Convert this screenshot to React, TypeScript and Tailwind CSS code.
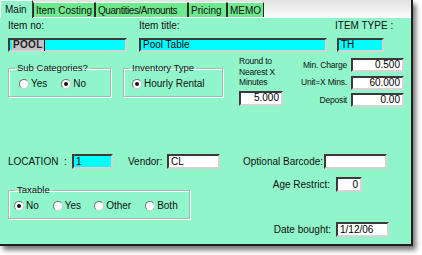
import React from "react";

const F = "font-['Liberation_Sans',Arial,sans-serif]";

function Field({ w, h = 14, cyan = false, value = "", right = false, children }: { w: number; h?: number; cyan?: boolean; value?: string; right?: boolean; children?: React.ReactNode }) {
  return (
    <div
      className={`flex items-center border-2 border-t-[#3a3a3a] border-l-[#3a3a3a] border-r-[#d4d4d4] border-b-[#d4d4d4] text-[10px] leading-none text-black px-[2px] ${cyan ? "bg-[#00ffff]" : "bg-white"} ${right ? "justify-end" : ""}`}
      style={{ width: w, height: h }}
    >
      {children ?? value}
    </div>
  );
}

function Radio({ label, checked = false }: { label: string; checked?: boolean }) {
  return (
    <div className="flex items-center gap-[2px]">
      <div className="w-[10px] h-[10px] rounded-full bg-white border border-t-[#707070] border-l-[#707070] border-r-[#c8c8c8] border-b-[#c8c8c8] flex items-center justify-center">
        {checked && <div className="w-[4px] h-[4px] rounded-full bg-[#111]" />}
      </div>
      <span className="text-[10px] leading-[12px] text-[#111]">{label}</span>
    </div>
  );
}

function Group({ title, w, children, pl }: { title: string; w: number; children: React.ReactNode; pl: number }) {
  return (
    <fieldset className="border border-[#a8b8b0] shadow-[inset_1px_1px_0_#ffffff,1px_1px_0_#ffffff]" style={{ width: w }}>
      <legend className="ml-[6px] px-[2px] text-[9.5px] leading-[12px] text-[#111]">{title}</legend>
      <div className="flex items-center pt-[4px] pb-[6px]" style={{ paddingLeft: pl }}>
        {children}
      </div>
    </fieldset>
  );
}

function Tab({ label, w, extra = "" }: { label: string; w: number; extra?: string }) {
  return (
    <div
      className={`h-[15px] bg-[#6ee98e] border-t border-l border-t-[#f0fff0] border-l-[#2a2a2a] border-r border-r-[#2a2a2a] flex items-center pl-[2px] pt-[1px] text-[10px] leading-none text-[#111] whitespace-nowrap overflow-hidden ${extra}`}
      style={{ width: w }}
    >
      {label}
    </div>
  );
}

export default function App() {
  return (
    <div className={`w-[422px] h-[255px] bg-white overflow-hidden ${F}`}>
      <div className="w-[413px] h-[246px] flex flex-col border-r-2 border-b-2 border-[#1e1e1e] shadow-[3px_4px_5px_rgba(0,0,0,0.55)]">
        {/* tab strip */}
        <div className="h-[17px] flex items-end bg-gradient-to-b from-[#e2e2e2] to-[#fbfbfb] relative z-10">
          <div className="w-[33px] h-[18px] -mb-[1px] bg-[#90f5c9] border-t border-l border-white border-r border-r-[#3a3a3a] flex items-start pt-[4px] pl-[4px] text-[10px] leading-none text-[#111]">
            Main
          </div>
          <Tab label="Item Costing" w={62} />
          <Tab label="Quantities/Amounts" w={93} extra="tracking-[-0.45px]" />
          <Tab label="Pricing" w={39} />
          <Tab label="MEMO" w={37} extra="pl-[1px]" />
        </div>
        {/* body */}
        <div className="flex-1 bg-[#90f5c9] border-t border-white pl-[8px] text-[#111] flex flex-col">
          {/* row 1 */}
          <div className="h-[35px] flex">
            <div className="w-[131px] flex flex-col">
              <div className="mt-[2px] h-[12px] text-[10px] leading-[12px]">Item no:</div>
              <div className="mt-[6px]">
                <Field w={119} cyan>
                  <span className="bg-[#c4c4c4] font-bold text-[#222] px-[1px] tracking-[0.3px]">POOL</span>
                  <span className="w-[1px] h-[11px] bg-black" />
                </Field>
              </div>
            </div>
            <div className="w-[196px] flex flex-col">
              <div className="mt-[2px] h-[12px] text-[10px] leading-[12px]">Item title:</div>
              <div className="mt-[6px]">
                <Field w={188} cyan value="Pool Table" />
              </div>
            </div>
            <div className="flex flex-col">
              <div className="mt-[2px] h-[12px] text-[10px] leading-[12px] whitespace-pre">ITEM TYPE :</div>
              <div className="mt-[6px] ml-[2px]">
                <Field w={47} cyan value="TH" />
              </div>
            </div>
          </div>
          {/* row 2 */}
          <div className="h-[54px] flex items-start">
            <div className="mt-[9px]">
              <Group title="Sub Categories?" w={103} pl={10}>
                <Radio label="Yes" />
                <div className="ml-[14px]">
                  <Radio label="No" checked />
                </div>
              </Group>
            </div>
            <div className="mt-[9px] ml-[12px]">
              <Group title="Inventory Type" w={100} pl={8}>
                <Radio label="Hourly Rental" checked />
              </Group>
            </div>
            <div className="ml-[16px] w-[44px] flex flex-col">
              <div className="mt-[3px] text-[8.5px] leading-[10.5px] tracking-[-0.2px] whitespace-nowrap">
                Round to
                <br />
                Nearest X
                <br />
                Minutes
              </div>
              <div className="mt-[3px]">
                <Field w={44} h={15} right value="5.000" />
              </div>
            </div>
            <div className="w-[121px] mt-[5px] flex flex-col gap-[3.5px]">
              {[
                ["Min. Charge", "0.500"],
                ["Unit=X Mins.", "60.000"],
                ["Deposit", "0.00"],
              ].map(([l, v]) => (
                <div key={l} className="flex items-center justify-end gap-[4px]">
                  <span className="text-[8.5px] leading-none tracking-[-0.2px]">{l}</span>
                  <Field w={53} right value={v} />
                </div>
              ))}
            </div>
          </div>
          {/* row 3 */}
          <div className="mt-[47px] h-[15px] flex items-center text-[10px] leading-none">
            <span className="w-[64px] whitespace-pre">LOCATION  :</span>
            <Field w={41} h={15} cyan value="1" />
            <span className="ml-[15px] w-[39px]">Vendor:</span>
            <Field w={53} h={15} value="CL" />
            <span className="ml-[23px] w-[81px]">Optional Barcode:</span>
            <Field w={63} h={15} />
          </div>
          {/* rows 4-5 */}
          <div className="flex">
            <div className="mt-[15px]">
              <Group title="Taxable" w={182} pl={5}>
                <Radio label="No" checked />
                <div className="ml-[14px]"><Radio label="Yes" /></div>
                <div className="ml-[13px]"><Radio label="Other" /></div>
                <div className="ml-[14px]"><Radio label="Both" /></div>
              </Group>
            </div>
            <div className="ml-[62px] mt-[8px] grid grid-cols-[84px_auto] items-center text-[10px] leading-none">
              <span className="text-right pr-[6px]">Age Restrict:</span>
              <Field w={26} h={15} right value="0" />
              <span className="text-right pr-[5px] mt-[30px]">Date bought:</span>
              <div className="mt-[30px]">
                <Field w={53} h={15} value="1/12/06" />
              </div>
            </div>
          </div>
        </div>
      </div>
    </div>
  );
}
